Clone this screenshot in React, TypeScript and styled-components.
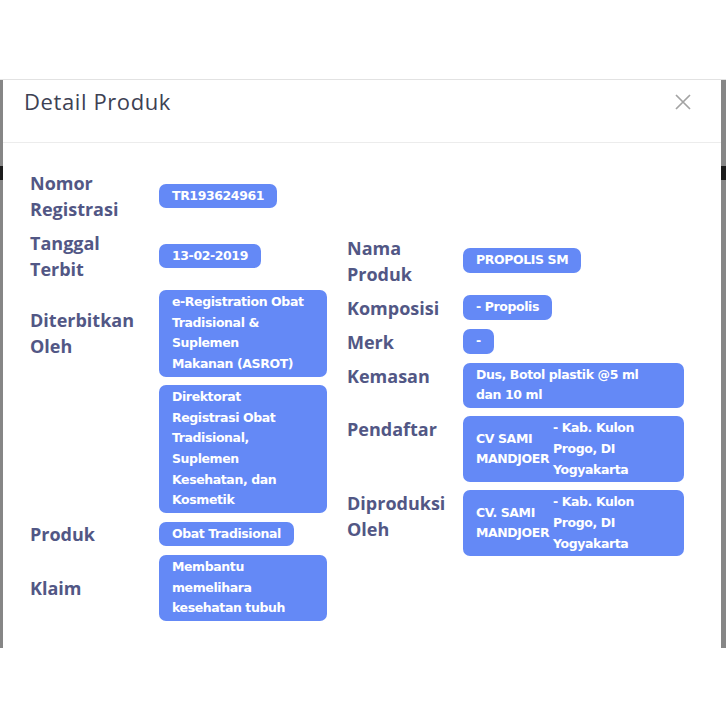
import React from "react";
import styled, { createGlobalStyle } from "styled-components";

const GlobalStyle = createGlobalStyle`
  html, body {
    margin: 0;
    padding: 0;
    background: #ffffff;
  }
  * {
    box-sizing: border-box;
  }
`;

const Page = styled.div`
  width: 726px;
  height: 726px;
  padding-top: 79px;
  background: #ffffff;
  overflow: hidden;
`;

// grey overlay behind the modal, with a strip of the dark page header showing through
const Backdrop = styled.div`
  height: 569px;
  display: flex;
  padding: 0 5px 0 3px;
  border-top: 1px solid #e2e2e2;
  background: linear-gradient(
    to bottom,
    #868686 0,
    #868686 86px,
    #1c1c1c 86px,
    #1c1c1c 100px,
    #868686 100px
  );
`;

const Modal = styled.div`
  flex: 1;
  background: #ffffff;
  overflow: hidden;
`;

const Header = styled.div`
  height: 63px;
  display: flex;
  justify-content: space-between;
  align-items: flex-start;
  padding: 6px 30px 0 21px;
  border-bottom: 1px solid #ececec;
`;

const Title = styled.h2`
  margin: 0;
  font-family: "Open Sans", "Liberation Sans", sans-serif;
  font-size: 22px;
  font-weight: 400;
  line-height: 30px;
  letter-spacing: 0.6px;
  color: #3d4153;
`;

const CloseButton = styled.button`
  border: 0;
  background: none;
  padding: 0;
  margin-top: 8px;
  width: 16px;
  height: 16px;
  cursor: pointer;
  display: flex;
`;

const Body = styled.div`
  padding: 27px 0 0 27px;
  display: flex;
  align-items: center;
  gap: 20px;
`;

const Column = styled.div<{ $width: number }>`
  width: ${(p) => p.$width}px;
  display: flex;
  flex-direction: column;
  gap: 8px;
`;

const Row = styled.div<{ $labelW: number; $top?: boolean }>`
  display: grid;
  grid-template-columns: ${(p) => p.$labelW}px 1fr;
  align-items: center;
  & > :first-child {
    align-self: ${(p) => (p.$top ? "start" : "center")};
  }
`;

const Label = styled.div`
  font-family: "Open Sans", "Liberation Sans", sans-serif;
  font-size: 18px;
  font-weight: 700;
  line-height: 26px;
  color: #525785;
  white-space: pre-line;
`;

const Value = styled.div`
  display: flex;
  align-items: center;
`;

const Pill = styled.div<{ $full?: boolean }>`
  display: ${(p) => (p.$full ? "flex" : "inline-block")};
  width: ${(p) => (p.$full ? "100%" : "auto")};
  align-items: center;
  padding: 2px 13px 2px 13px;
  border-radius: 7px;
  background: #6489f6;
  color: #ffffff;
  font-family: "DejaVu Sans", "Liberation Sans", sans-serif;
  font-size: 12.5px;
  font-weight: 700;
  line-height: 20.7px;
  letter-spacing: -0.4px;
  white-space: pre-line;
`;

const Company = styled.span`
  width: 77px;
  flex: none;
  white-space: pre;
`;

const Address = styled.span`
  flex: 1;
  white-space: pre-line;
`;

type Item = {
  label: string;
  value?: string;
  full?: boolean;
  company?: string;
};

const leftItems: Item[] = [
  { label: "Nomor\nRegistrasi", value: "TR193624961" },
  { label: "Tanggal\nTerbit", value: "13-02-2019" },
  {
    label: "Diterbitkan\nOleh",
    value: "e-Registration Obat\nTradisional &\nSuplemen\nMakanan (ASROT)",
    full: true,
  },
  {
    label: "",
    value:
      "Direktorat\nRegistrasi Obat\nTradisional,\nSuplemen\nKesehatan, dan\nKosmetik",
    full: true,
  },
  { label: "Produk", value: "Obat Tradisional" },
  {
    label: "Klaim",
    value: "Membantu\nmemelihara\nkesehatan tubuh",
    full: true,
  },
];

const rightItems: Item[] = [
  { label: "Nama\nProduk", value: "PROPOLIS SM" },
  { label: "Komposisi", value: "- Propolis" },
  { label: "Merk", value: "-" },
  { label: "Kemasan", value: "Dus, Botol plastik @5 ml\ndan 10 ml", full: true },
  {
    label: "Pendaftar",
    company: "CV SAMI\nMANDJOER",
    value: "- Kab. Kulon\nProgo, DI\nYogyakarta",
  },
  {
    label: "Diproduksi\nOleh",
    company: "CV. SAMI\nMANDJOER",
    value: "- Kab. Kulon\nProgo, DI\nYogyakarta",
  },
];

function renderValue(item: Item) {
  if (item.company) {
    return (
      <Pill $full>
        <Company>{item.company}</Company>
        <Address>{item.value}</Address>
      </Pill>
    );
  }
  return <Pill $full={item.full}>{item.value}</Pill>;
}

export default function App() {
  return (
    <>
      <GlobalStyle />
      <Page>
        <Backdrop>
          <Modal>
            <Header>
              <Title>Detail Produk</Title>
              <CloseButton aria-label="Close">
                <svg width="16" height="16" viewBox="0 0 16 16">
                  <path
                    d="M1 1 L15 15 M15 1 L1 15"
                    stroke="#a3a3a3"
                    strokeWidth="1.7"
                    fill="none"
                  />
                </svg>
              </CloseButton>
            </Header>
            <Body>
              <Column $width={297}>
                {leftItems.map((item, i) => (
                  <Row key={i} $labelW={129}>
                    <Label>{item.label}</Label>
                    <Value>{renderValue(item)}</Value>
                  </Row>
                ))}
              </Column>
              <Column $width={337}>
                {rightItems.map((item, i) => (
                  <Row key={i} $labelW={116} $top={i > 2}>
                    <Label>{item.label}</Label>
                    <Value>{renderValue(item)}</Value>
                  </Row>
                ))}
              </Column>
            </Body>
          </Modal>
        </Backdrop>
      </Page>
    </>
  );
}
